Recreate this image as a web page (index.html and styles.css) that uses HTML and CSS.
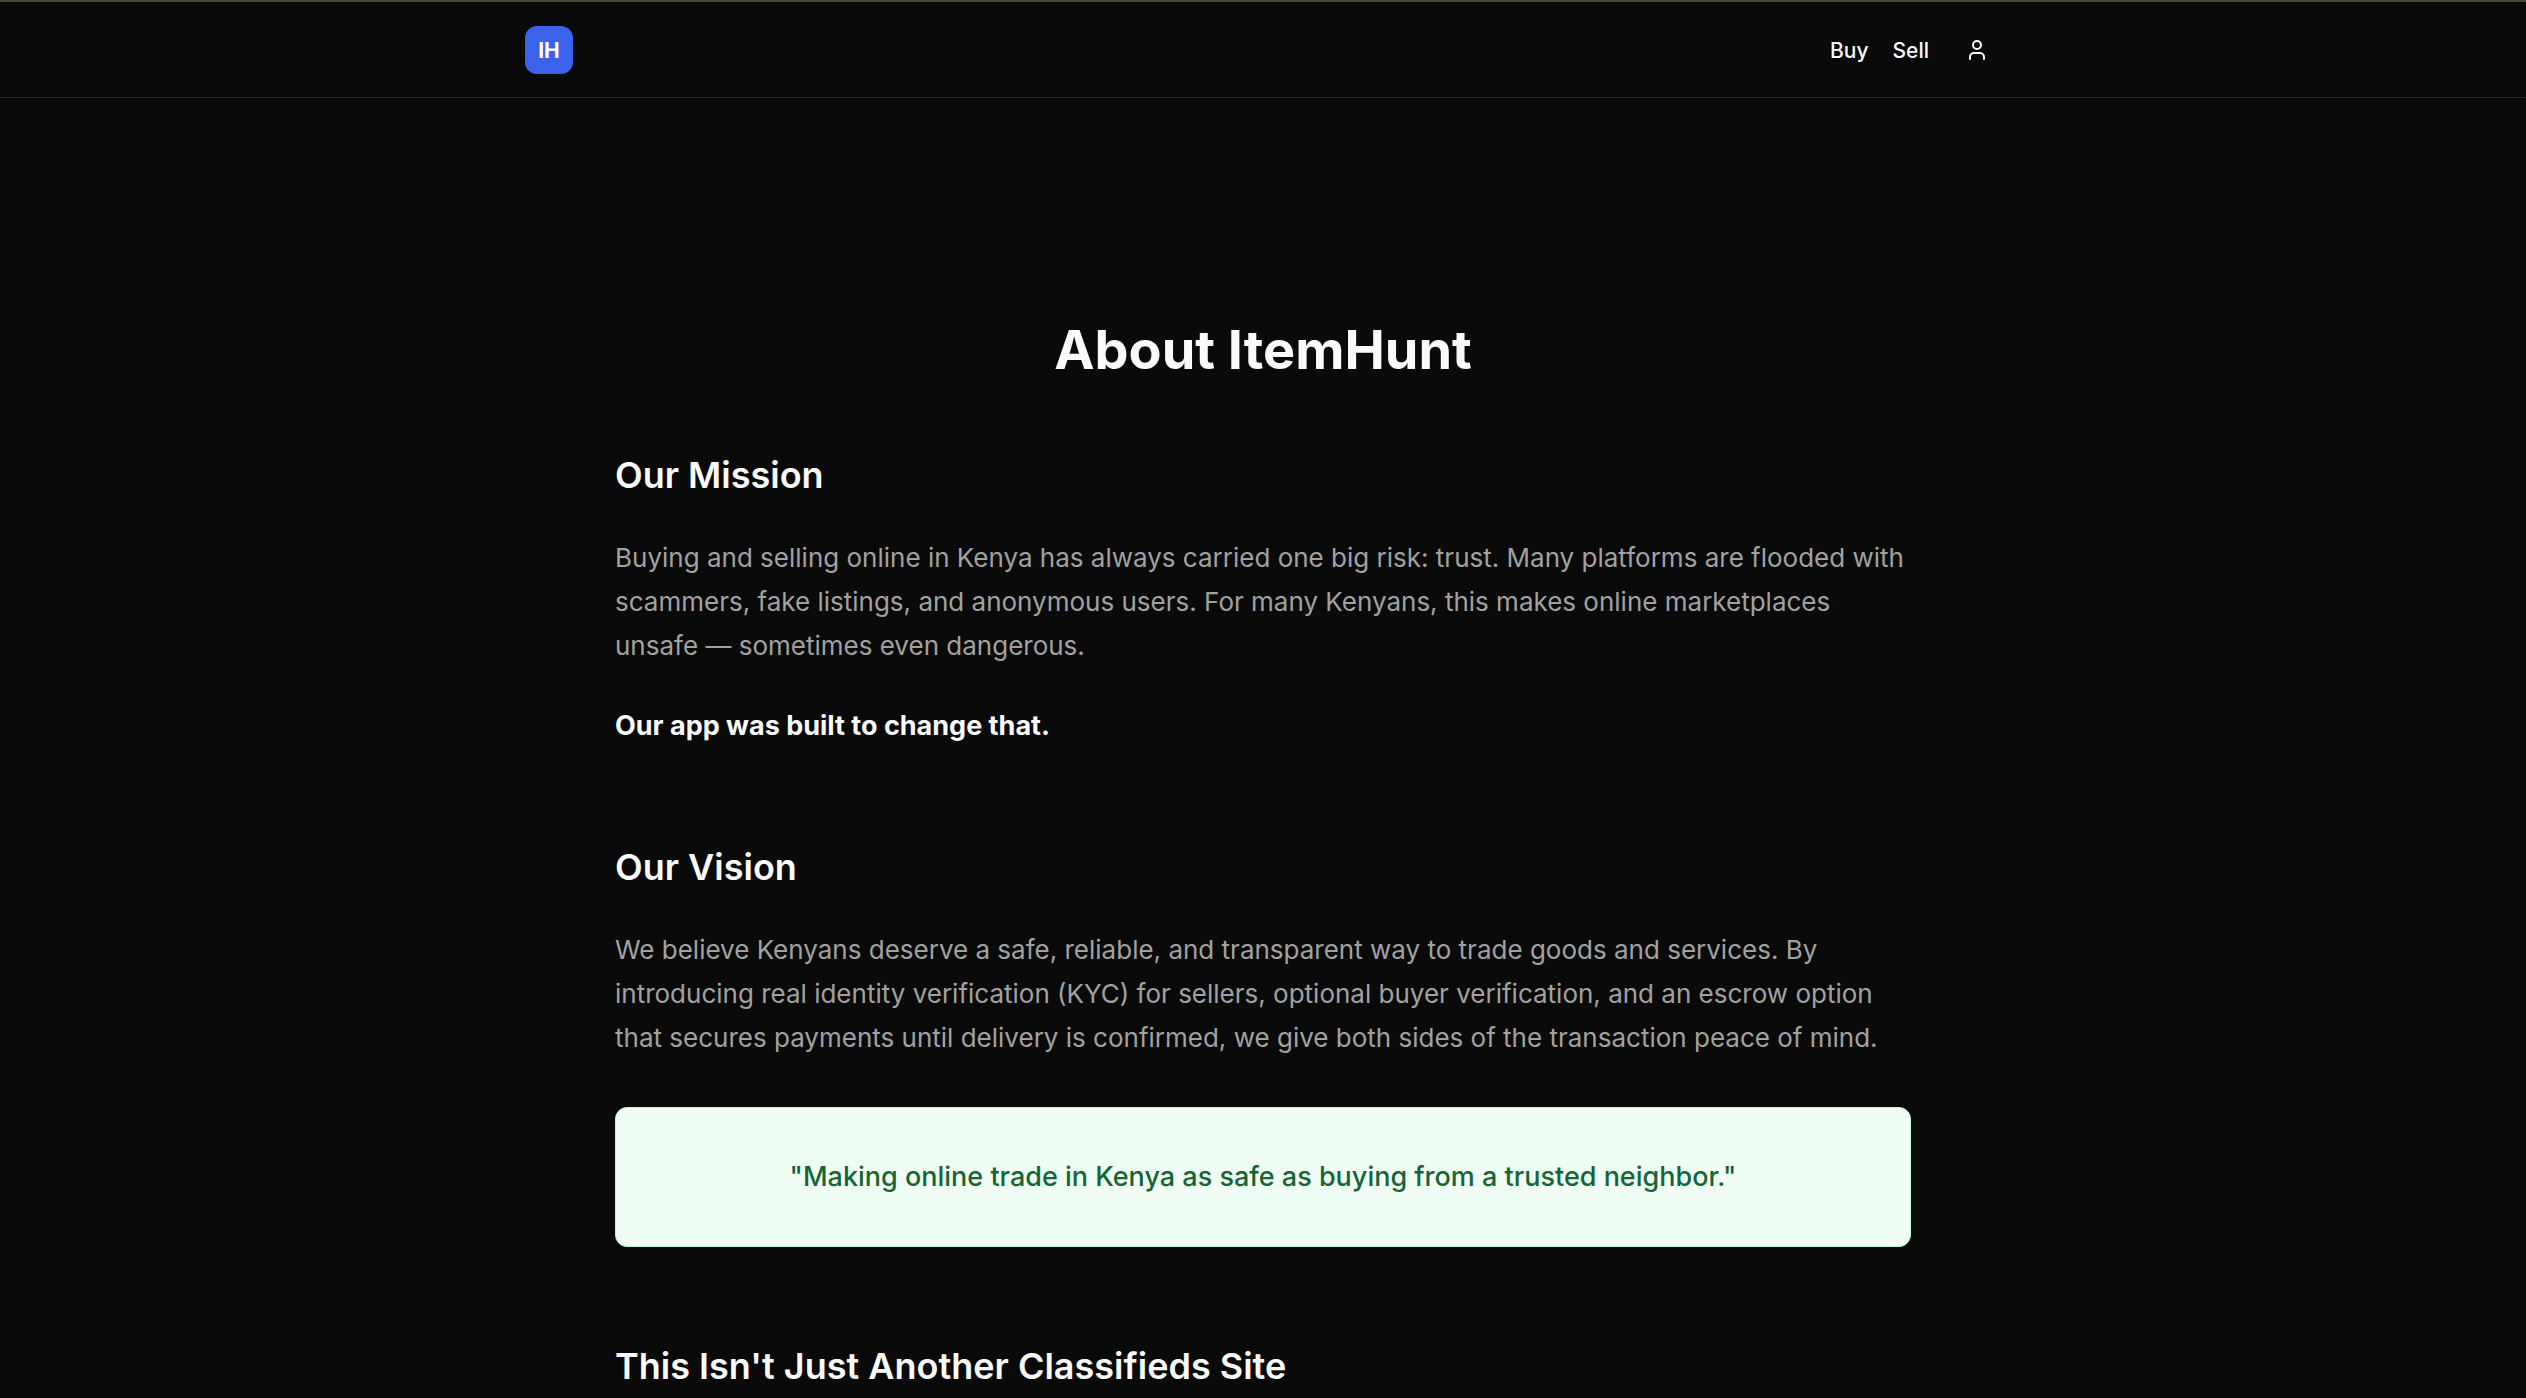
FILE: index.html
```html
<!DOCTYPE html>
<html lang="en">
<head>
    <meta charset="UTF-8">
    <meta name="viewport" content="width=device-width, initial-scale=1.0">
    <title>About ItemHunt</title>
    <link rel="stylesheet" href="styles.css">
</head>
<body>

    <header class="site-header">
        <div class="header-inner">
            <a href="#" class="logo">IH</a>
            <nav class="site-nav">
                <a href="#">Buy</a>
                <a href="#">Sell</a>
                <button class="user-button" type="button" aria-label="Account">
                    <svg width="24" height="24" viewBox="0 0 24 24" fill="none" stroke="currentColor" stroke-width="2" stroke-linecap="round" stroke-linejoin="round">
                        <path d="M19 21v-2a4 4 0 0 0-4-4H9a4 4 0 0 0-4 4v2"/>
                        <circle cx="12" cy="7" r="4"/>
                    </svg>
                </button>
            </nav>
        </div>
    </header>

    <main class="about">
        <h1>About ItemHunt</h1>

        <section>
            <h2>Our Mission</h2>
            <p>Buying and selling online in Kenya has always carried one big risk: trust. Many platforms are flooded with scammers, fake listings, and anonymous users. For many Kenyans, this makes online marketplaces unsafe — sometimes even dangerous.</p>
            <p class="highlight">Our app was built to change that.</p>
        </section>

        <section>
            <h2>Our Vision</h2>
            <p>We believe Kenyans deserve a safe, reliable, and transparent way to trade goods and services. By introducing real identity verification (KYC) for sellers, optional buyer verification, and an escrow option that secures payments until delivery is confirmed, we give both sides of the transaction peace of mind.</p>
            <blockquote class="quote">"Making online trade in Kenya as safe as buying from a trusted neighbor."</blockquote>
        </section>

        <section>
            <h2>This Isn't Just Another Classifieds Site</h2>
        </section>
    </main>

</body>
</html>
```

FILE: styles.css
```css
* {
    box-sizing: border-box;
}

body {
    margin: 0;
    height: 100vh;
    overflow: hidden;
    background-color: #0a0a0a;
    color: #fafafa;
    font-family: Inter, "Liberation Sans", sans-serif;
}

.site-header {
    border-top: 2px solid #46483a;
    border-bottom: 1px solid #262626;
}

.header-inner {
    display: flex;
    justify-content: space-between;
    align-items: center;
    max-width: 1536px;
    margin: 0 auto;
    padding: 24px 30px 23px;
}

.logo {
    display: flex;
    justify-content: center;
    align-items: center;
    width: 48px;
    height: 48px;
    border-radius: 12px;
    background-color: #3b62eb;
    color: #fff;
    font-size: 21px;
    font-weight: 700;
    text-decoration: none;
}

.site-nav {
    display: flex;
    align-items: center;
    gap: 24px;
}

.site-nav a {
    color: #fafafa;
    font-size: 21px;
    font-weight: 500;
    text-decoration: none;
}

.user-button {
    display: flex;
    justify-content: center;
    align-items: center;
    width: 48px;
    height: 48px;
    padding: 0;
    border: none;
    background: none;
    color: #fafafa;
    cursor: pointer;
}

.about {
    max-width: 1344px;
    margin: 0 auto;
    padding: 222px 24px 96px;
}

h1 {
    margin: 0 0 72px;
    font-size: 54px;
    line-height: 60px;
    font-weight: 700;
    text-align: center;
}

section {
    margin-bottom: 96px;
}

h2 {
    margin: 0 0 38px;
    font-size: 36px;
    line-height: 46px;
    font-weight: 600;
}

p {
    margin: 0 0 36px;
    color: #a1a1a1;
    font-size: 26px;
    line-height: 44px;
}

.highlight {
    margin-bottom: 0;
    color: #fafafa;
    font-size: 27px;
    font-weight: 700;
}

.quote {
    margin: 47px 0 0;
    padding: 48px;
    border: 1px solid #b9f8cf;
    border-radius: 12px;
    background-color: #f0fdf4;
    color: #166534;
    font-size: 27px;
    line-height: 42px;
    font-weight: 500;
    text-align: center;
}
```
